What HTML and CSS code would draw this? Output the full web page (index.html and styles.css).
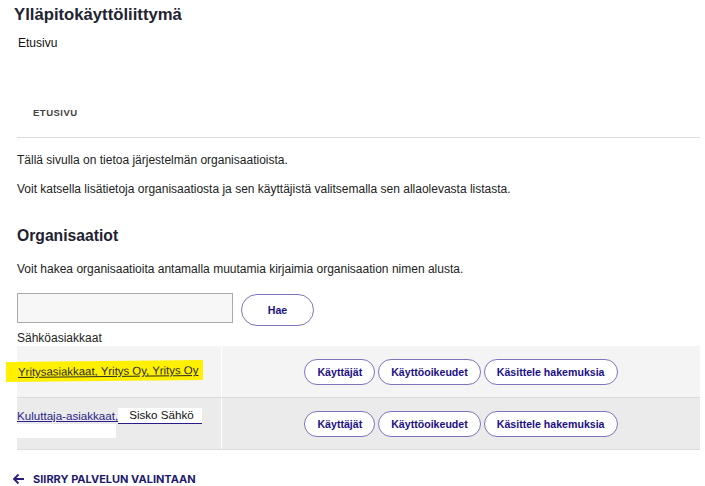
FILE: index.html
```html
<!DOCTYPE html>
<html lang="fi">
<head>
<meta charset="utf-8">
<title>Ylläpitokäyttöliittymä</title>
<link rel="stylesheet" href="styles.css">
</head>
<body>
<div class="page">
  <h1 class="app-title">Ylläpitokäyttöliittymä</h1>
  <div class="crumb">Etusivu</div>
  <div class="tab">ETUSIVU</div>
  <hr class="divider">
  <p class="text p1">Tällä sivulla on tietoa järjestelmän organisaatioista.</p>
  <p class="text p2">Voit katsella lisätietoja organisaatiosta ja sen käyttäjistä valitsemalla sen allaolevasta listasta.</p>
  <h2 class="section-title">Organisaatiot</h2>
  <p class="text p3">Voit hakea organisaatioita antamalla muutamia kirjaimia organisaation nimen alusta.</p>
  <div class="search">
    <input class="search-input" type="text">
    <button class="pill search-btn">Hae</button>
  </div>
  <div class="group-label">Sähköasiakkaat</div>
  <div class="org-table">
    <div class="org-row row-a">
      <div class="name-cell">
        <a class="org-link highlighted" href="#">Yritysasiakkaat, Yritys Oy, Yritys Oy</a>
      </div>
      <div class="action-cell">
        <button class="pill">Käyttäjät</button>
        <button class="pill">Käyttöoikeudet</button>
        <button class="pill">Käsittele hakemuksia</button>
      </div>
    </div>
    <div class="org-row row-b">
      <div class="name-cell">
        <div class="name-line">
          <a class="org-link blue" href="#">Kuluttaja-asiakkaat,</a><span class="person">Sisko Sähkö</span>
        </div>
        <div class="wrap-fill"></div>
      </div>
      <div class="action-cell">
        <button class="pill">Käyttäjät</button>
        <button class="pill">Käyttöoikeudet</button>
        <button class="pill">Käsittele hakemuksia</button>
      </div>
    </div>
  </div>
  <a class="back-link" href="#">
    <svg class="back-arrow" width="13" height="12" viewBox="0 0 13 12"><path d="M12 6H2M6.5 1.5L2 6l4.5 4.5" fill="none" stroke="#2a1d7a" stroke-width="1.8"/></svg>
    <span>SIIRRY PALVELUN VALINTAAN</span>
  </a>
</div>
</body>
</html>
```
FILE: styles.css
```css
html, body {
  margin: 0;
  padding: 0;
  background: #fff;
}
body {
  font-family: "Liberation Sans", Arial, sans-serif;
  color: #222;
}
.page {
  padding: 0 5px 0 0;
}
.app-title {
  margin: 4px 0 0 14px;
  font-size: 16.7px;
  line-height: 22px;
  font-weight: bold;
  color: #222230;
}
.crumb {
  margin: 9px 0 0 18px;
  font-size: 12px;
  line-height: 16px;
  color: #111;
}
.tab {
  margin: 54px 0 0 33px;
  font-size: 9.5px;
  line-height: 16px;
  font-weight: bold;
  color: #444;
  letter-spacing: 0.5px;
}
.divider {
  margin: 16px 0 0 17px;
  border: 0;
  border-top: 1px solid #dcdcdc;
  height: 0;
}
.text {
  margin: 0 0 0 17px;
  font-size: 12px;
  line-height: 16px;
  color: #222;
}
.p1 { margin-top: 14px; }
.p2 { margin-top: 13px; }
.section-title {
  margin: 29px 0 0 17px;
  font-size: 15.7px;
  line-height: 20px;
  font-weight: bold;
  color: #222230;
}
.p3 { margin-top: 15px; }
.search {
  display: flex;
  align-items: flex-start;
  gap: 8px;
  margin: 16px 0 0 17px;
}
.search-input {
  box-sizing: border-box;
  width: 216px;
  height: 30px;
  margin: 0;
  background: #f7f7f7;
  border: 1px solid #aaa;
}
.pill {
  box-sizing: border-box;
  height: 26px;
  padding: 0 12px;
  border: 1px solid #7f74bd;
  border-radius: 14px;
  background: #fff;
  font-family: "Liberation Sans", Arial, sans-serif;
  font-size: 10.6px;
  font-weight: bold;
  color: #1c0f86;
  cursor: pointer;
}
.search-btn {
  width: 73px;
  height: 32px;
  margin-top: 1px;
  border-radius: 16px;
}
.group-label {
  margin: 4px 0 0 17px;
  font-size: 12px;
  line-height: 16px;
  color: #222;
}
.org-table {
  margin-left: 17px;
}
.org-row {
  display: flex;
  height: 51px;
  border-bottom: 1px solid #dcdcdc;
}
.row-a { background: #f4f4f4; }
.row-b { background: #ebebeb; }
.name-cell {
  width: 205px;
  border-right: 1px solid #fff;
  box-sizing: border-box;
}
.action-cell {
  flex: 1;
  display: flex;
  justify-content: center;
  align-items: center;
  gap: 3px;
}
.org-link {
  font-size: 11.6px;
  line-height: 16px;
  text-decoration: underline;
  white-space: nowrap;
}
.highlighted {
  display: inline-block;
  margin: 15px 0 0 -11px;
  padding: 2px 0 2px 12px;
  width: 185px;
  font-size: 11.4px;
  background: #fff000;
  color: #2a2a2a;
  transform: skewY(-0.6deg);
}
.name-line {
  display: flex;
  margin-top: 10px;
  font-size: 11.6px;
  line-height: 15px;
}
.blue {
  color: #2a1d8a;
}
.person {
  flex: 1;
  margin-right: 19px;
  padding-left: 11px;
  background: #fff;
  color: #111;
  border-bottom: 1px solid #2a1d8a;
  line-height: 14px;
}
.wrap-fill {
  width: 99px;
  height: 14px;
  background: #fff;
}
.back-link {
  display: flex;
  align-items: center;
  gap: 8px;
  margin: 21px 0 0 12px;
  text-decoration: none;
  font-family: Inter, "Liberation Sans", sans-serif;
  font-size: 11px;
  line-height: 16px;
  font-weight: bold;
  color: #1f1a6e;
}
.back-arrow {
  display: block;
}
```
